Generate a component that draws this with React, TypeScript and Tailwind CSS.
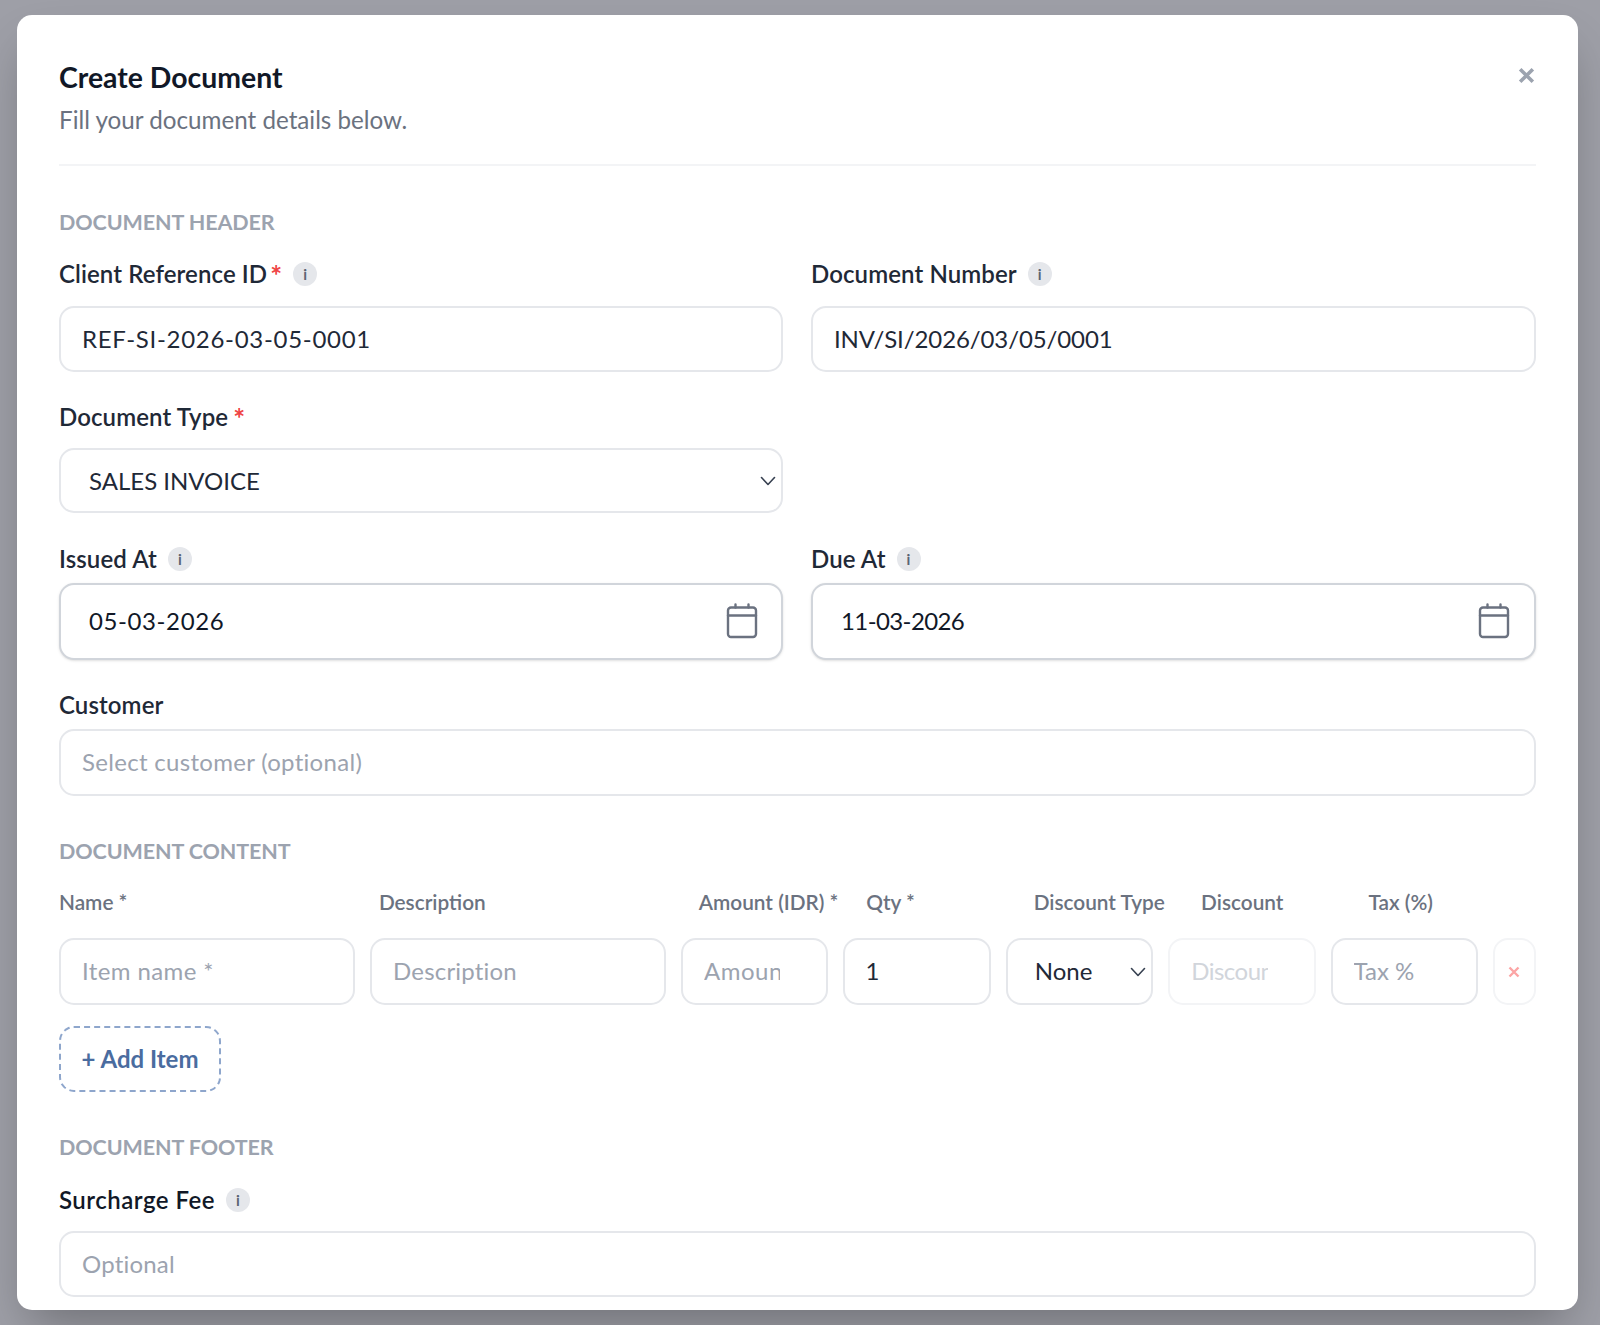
import React from "react";

function Info() {
  return (
    <span className="ml-[11px] flex h-[24px] w-[24px] items-center justify-center rounded-full bg-[#e5e7eb] text-[15px] font-bold leading-none text-[#5b6473]">
      i
    </span>
  );
}

function Section({ children, className }: { children: React.ReactNode; className: string }) {
  return (
    <div className={"h-[28px] text-[21.5px] font-bold uppercase leading-[28px] tracking-[-0.1px] text-[#9ca3af] " + className}>
      {children}
    </div>
  );
}

function Label({ children, className, required, info, tight }: { children: React.ReactNode; className: string; required?: boolean; info?: boolean; tight?: boolean }) {
  return (
    <div className={"flex h-[28px] items-center text-[24px] font-semibold leading-[28px] tracking-[0.1px] text-[#1f2937] " + className}>
      <span>{children}</span>
      {required && (
        <span className={(tight ? "ml-[3px]" : "ml-[5px]") + " h-[28px] text-[28px] font-bold leading-[30px] text-[#ef4444]"}>*</span>
      )}
      {info && <Info />}
    </div>
  );
}

const inputBase =
  "block w-full rounded-[15px] border-2 border-[#e5e7eb] bg-white px-[21px] pb-[2px] text-[24px] text-[#1f2937] outline-none placeholder:text-[#9ca3af]";

function Field({ value, placeholder, className }: { value?: string; placeholder?: string; className?: string }) {
  return <input readOnly defaultValue={value} placeholder={placeholder} className={inputBase + " " + (className ?? "h-[67px]")} />;
}

function DateField({ value, className, iconClass }: { value: string; className: string; iconClass: string }) {
  return (
    <div className="relative">
      <input
        readOnly
        defaultValue={value}
        className={"block h-[77px] w-full rounded-[15px] border-2 border-[#d1d5db] bg-white px-[28px] pb-[2px] text-[24px] text-[#111827] shadow-sm outline-none " + className}
      />
      <svg className={"absolute top-[20px] h-[36px] w-[32px] " + iconClass} viewBox="0 0 32 36" fill="none" stroke="#6b7280" strokeWidth="2.4" strokeLinecap="round" strokeLinejoin="round">
        <rect x="2" y="4.5" width="28" height="29.5" rx="3" />
        <path d="M2 12.5h28M9.5 1.5v3M22.5 1.5v3" />
      </svg>
    </div>
  );
}

function Chevron({ className }: { className: string }) {
  return (
    <svg className={"pointer-events-none absolute " + className} viewBox="0 0 16 10" fill="none" stroke="#374151" strokeWidth="1.6" strokeLinecap="round" strokeLinejoin="round">
      <path d="M1.5 1.5 8 8.5l6.5-7" />
    </svg>
  );
}

function ColHead({ children }: { children: React.ReactNode }) {
  return <div className="whitespace-nowrap text-[20.8px] font-semibold leading-[24px] text-[#6b7280]">{children}</div>;
}

export default function App() {
  return (
    <div className="h-[1325px] w-full overflow-hidden bg-[#9e9fa7] pl-[17px] pt-[15px] font-[Lato,sans-serif]">
      <div className="relative h-[1295px] w-[1561px] rounded-[15px] bg-white pl-[42px] pr-[42px] pt-[44px] shadow-[0_25px_50px_-12px_rgba(0,0,0,0.3)]">
        <button className="absolute right-[42px] top-[51px] text-[#9ca3af]" aria-label="Close">
          <svg className="h-[19px] w-[19px]" viewBox="0 0 18 18" fill="none" stroke="currentColor" strokeWidth="3.4">
            <path d="M3 3l12 12M15 3 3 15" />
          </svg>
        </button>

        <h1 className="h-[36px] text-[28.4px] font-bold leading-[36px] text-[#111827]">Create Document</h1>
        <p className="mt-[8px] h-[34px] text-[24.2px] leading-[34px] text-[#6b7280]">Fill your document details below.</p>
        <div className="mt-[27px] h-[2px] bg-[#f3f4f6]" />

        <Section className="mt-[42px]">Document Header</Section>
        <div className="grid grid-cols-[724px_1fr] gap-x-[28px]">
          <div>
            <Label className="mt-[24px]" required info tight>Client Reference ID</Label>
            <Field className="mt-[18px] h-[66px] tracking-[0.7px]" value="REF-SI-2026-03-05-0001" />
          </div>
          <div>
            <Label className="mt-[24px]" info>Document Number</Label>
            <Field className="mt-[18px] h-[66px] tracking-[-0.1px]" value="INV/SI/2026/03/05/0001" />
          </div>
          <div>
            <Label className="mt-[31px]" required>Document Type</Label>
            <div className="relative mt-[17px]">
              <select className="block h-[65px] w-full appearance-none rounded-[15px] border-2 border-[#e5e7eb] bg-white px-[28px] text-[24px] text-[#1f2937] outline-none">
                <option>SALES INVOICE</option>
              </select>
              <Chevron className="right-[7px] top-[28px] h-[10px] w-[16px]" />
            </div>
          </div>
          <div />
          <div>
            <Label className="mt-[32px]" info>Issued At</Label>
            <div className="mt-[10px]"><DateField value="05-03-2026" className="tracking-[0.6px]" iconClass="right-[25px]" /></div>
          </div>
          <div>
            <Label className="mt-[32px]" info>Due At</Label>
            <div className="mt-[10px]"><DateField value="11-03-2026" className="tracking-[-0.6px]" iconClass="right-[26px]" /></div>
          </div>
        </div>
        <Label className="mt-[31px]">Customer</Label>
        <Field className="mt-[10px] h-[67px] tracking-[0.3px]" placeholder="Select customer (optional)" />

        <Section className="mt-[41px]">Document Content</Section>
        <div className="mt-[25px] grid grid-cols-[2fr_2fr_1fr_1fr_1fr_1fr_1fr] gap-x-[15px] pr-[15px]">
          <ColHead>Name *</ColHead>
          <ColHead>Description</ColHead>
          <ColHead>Amount (IDR) *</ColHead>
          <ColHead>Qty *</ColHead>
          <ColHead>Discount Type</ColHead>
          <ColHead>Discount</ColHead>
          <ColHead>Tax (%)</ColHead>
        </div>
        <div className="mt-[24px] grid grid-cols-[296px_296px_1fr_1fr_1fr_1fr_1fr_43px] gap-x-[15px]">
          <Field className="h-[67px] min-w-0 tracking-[0.4px]" placeholder="Item name *" />
          <Field className="h-[67px] min-w-0 tracking-[0.2px]" placeholder="Description" />
          <Field className="h-[67px] min-w-0 !pr-[46px] tracking-[0.5px]" placeholder="Amount" />
          <Field className="h-[67px] min-w-0 !pl-[20px]" value="1" />
          <div className="relative min-w-0">
            <select className="block h-[67px] w-full appearance-none rounded-[15px] border-2 border-[#e5e7eb] bg-white px-[27px] pb-[2px] text-[24px] text-[#1f2937] outline-none">
              <option>None</option>
            </select>
            <Chevron className="right-[7px] top-[29px] h-[10px] w-[16px]" />
          </div>
          <input
            disabled
            placeholder="Discount"
            className="block h-[67px] w-full min-w-0 rounded-[15px] border-2 border-[#f3f4f6] bg-white pb-[2px] pl-[21px] pr-[46px] text-[24px] tracking-[-0.5px] outline-none placeholder:text-[#d1d5db]"
          />
          <Field className="h-[67px] min-w-0" placeholder="Tax %" />
          <button className="flex h-[67px] items-center justify-center rounded-[15px] border-2 border-[#f3f4f6] bg-white" aria-label="Remove">
            <svg className="h-[12px] w-[12px]" viewBox="0 0 12 12" fill="none" stroke="#fca5a5" strokeWidth="2.4">
              <path d="M1.5 1.5l9 9M10.5 1.5l-9 9" />
            </svg>
          </button>
        </div>
        <button className="mt-[21px] h-[66px] w-[162px] rounded-[15px] border-2 border-dashed border-[#8ea6cc] bg-white text-center text-[24px] font-bold text-[#4a6c9f]">
          + Add Item
        </button>

        <Section className="mt-[41px]">Document Footer</Section>
        <Label className="mt-[25px] !text-[#111827] tracking-[0.5px]" info>Surcharge Fee</Label>
        <Field className="mt-[17px] h-[66px] tracking-[0.2px]" placeholder="Optional" />
      </div>
    </div>
  );
}
